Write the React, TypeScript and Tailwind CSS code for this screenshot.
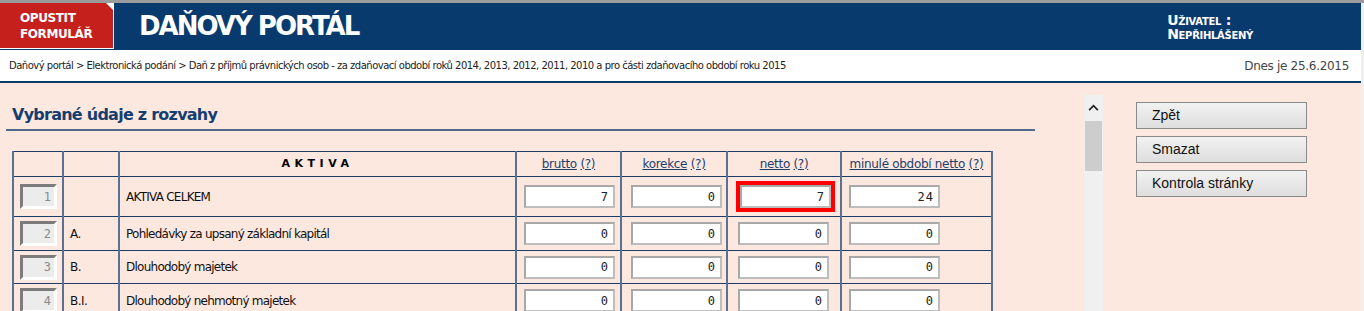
import type { ReactNode } from "react";

const tahoma = "font-['DejaVu_Sans',Verdana,sans-serif]";

const rows = [
  { n: "1", code: "", label: "AKTIVA CELKEM", vals: ["7", "0", "7", "24"], h: "h-[40px]" },
  { n: "2", code: "A.", label: "Pohledávky za upsaný základní kapitál", vals: ["0", "0", "0", "0"], h: "h-[34px]" },
  { n: "3", code: "B.", label: "Dlouhodobý majetek", vals: ["0", "0", "0", "0"], h: "h-[33px]" },
  { n: "4", code: "B.I.", label: "Dlouhodobý nehmotný majetek", vals: ["0", "0", "0", "0"], h: "h-[34px]" },
];

const cols = ["brutto", "korekce", "netto", "minulé období netto"];

function Cell({ children, className = "" }: { children?: ReactNode; className?: string }) {
  return (
    <td
      className={`border-x-2 border-x-[#5a7193] border-y border-y-[#1e3c69] p-0 ${className}`}
    >
      {children}
    </td>
  );
}

function NumBox({ value }: { value: string }) {
  return (
    <div className="flex h-[23px] w-[91px] items-center justify-end border-2 border-t-[#a8a8a8] border-l-[#a8a8a8] border-r-[#bdbdbd] border-b-[#bdbdbd] bg-white pr-[4px] font-['DejaVu_Sans_Mono',monospace] text-[12px] tracking-[1px] text-[#222]">
      {value}
    </div>
  );
}

function RowNo({ n }: { n: string }) {
  return (
    <div className="ml-[6px] flex h-[25px] w-[37px] items-center justify-end border-[3px] border-t-[#7c7c7c] border-l-[#7c7c7c] border-r-white border-b-white bg-[#ececec] pr-[3px] font-['DejaVu_Sans_Mono',monospace] text-[12px] text-[#8a8a8a]">
      {n}
    </div>
  );
}

function SideButton({ label }: { label: string }) {
  return (
    <button
      type="button"
      className="flex h-[27px] w-[171px] items-center border border-[#8a8a8a] bg-gradient-to-b from-[#f2f2f2] to-[#dedede] pl-[15px] font-['Liberation_Sans',Arial,sans-serif] text-[14px] text-[#111]"
    >
      {label}
    </button>
  );
}

export default function App() {
  return (
    <div className={`h-[311px] w-[1364px] overflow-hidden bg-[#f0f0f0] ${tahoma}`}>
      <div className="h-[3px] bg-[#9b9b9b]" />
      <div className="w-[1361px]">
        {/* header */}
        <header className="flex h-[47px] items-stretch bg-[#093a6e]">
          <div className="relative flex h-[46px] w-[114px] flex-col justify-center border-r border-b border-white bg-[#c6201c] pl-[20px] text-[12px] font-bold leading-[16px] tracking-[-0.4px] text-white">
            <span>OPUSTIT</span>
            <span>FORMULÁŘ</span>
            <span className="absolute right-0 top-0 h-0 w-0 border-l-[7px] border-t-[7px] border-l-transparent border-t-white" />
          </div>
          <h1 className="ml-[25px] flex items-center text-[26px] font-bold tracking-[-2px] text-white">
            DAŇOVÝ PORTÁL
          </h1>
          <div className="ml-auto mr-[108px] flex flex-col justify-center text-[14px] font-bold leading-[14px] tracking-[-0.3px] text-white [font-variant:small-caps]">
            <span>Uživatel :</span>
            <span>Nepřihlášený</span>
          </div>
        </header>

        {/* breadcrumb */}
        <div className="flex h-[33px] items-center justify-between border-b-2 border-[#0d3a6b] bg-white pl-[9px] pr-[12px]">
          <span className="text-[10px] tracking-[-0.5px] text-[#222]">
            Daňový portál &gt; Elektronická podání &gt; Daň z příjmů právnických osob - za zdaňovací období roků 2014, 2013, 2012, 2011, 2010 a pro části zdaňovacího období roku 2015
          </span>
          <span className="text-[12px] tracking-[-0.3px] text-[#444]">Dnes je 25.6.2015</span>
        </div>

        {/* content */}
        <div className="flex h-[228px] bg-[#fde8e0]">
          <div className="w-[1084px] pl-[6px]">
            <h2 className="h-[48px] w-[1029px] border-b-2 border-[#53698b] pl-[6px] pt-[20px] text-[16px] font-bold tracking-[-0.75px] text-[#153e6e]">
              Vybrané údaje z rozvahy
            </h2>
            <table className="ml-[6px] mt-[20px] table-fixed border-collapse border-t border-t-[#1e3c69]">
              <colgroup>
                <col className="w-[50px]" />
                <col className="w-[56px]" />
                <col className="w-[397px]" />
                <col className="w-[105px]" />
                <col className="w-[106px]" />
                <col className="w-[114px]" />
                <col className="w-[151px]" />
              </colgroup>
              <thead>
                <tr className="h-[25px]">
                  <Cell />
                  <Cell />
                  <Cell className="text-center text-[11px] font-bold tracking-[4.5px] text-black">AKTIVA</Cell>
                  {cols.map((c) => (
                    <Cell key={c} className="text-center text-[12px] tracking-[-0.3px] text-[#1d3e6b]">
                      <span className="underline">{c}</span> <span className="underline">(?)</span>
                    </Cell>
                  ))}
                </tr>
              </thead>
              <tbody>
                {rows.map((r) => (
                  <tr key={r.n} className={r.h}>
                    <Cell>
                      <RowNo n={r.n} />
                    </Cell>
                    <Cell className="pl-[6px] text-[12px] tracking-[-0.5px] text-[#111]">{r.code}</Cell>
                    <Cell className="pl-[6px] text-[12px] tracking-[-0.75px] text-[#111]">{r.label}</Cell>
                    <Cell className="pl-[7px]">
                      <NumBox value={r.vals[0]} />
                    </Cell>
                    <Cell className="pl-[9px]">
                      <NumBox value={r.vals[1]} />
                    </Cell>
                    <Cell className={r.n === "1" ? "pl-[8px]" : "pl-[10px]"}>
                      {r.n === "1" ? (
                        <div className="w-[99px] border-[4px] border-[#ff0000]">
                          <NumBox value={r.vals[2]} />
                        </div>
                      ) : (
                        <NumBox value={r.vals[2]} />
                      )}
                    </Cell>
                    <Cell className="pl-[7px]">
                      <NumBox value={r.vals[3]} />
                    </Cell>
                  </tr>
                ))}
              </tbody>
            </table>
          </div>

          {/* inner scrollbar */}
          <div className="mt-[12px] flex w-[19px] flex-col items-center bg-[#f0f0f0]">
            <svg viewBox="0 0 12 8" className="mt-[9px] h-[7px] w-[11px]" aria-hidden="true">
              <path d="M1 7L6 2l5 5" fill="none" stroke="#222" strokeWidth="2" />
            </svg>
            <div className="mt-[10px] h-[50px] w-[17px] bg-[#cdcdcd]" />
          </div>

          <div className="ml-[33px] flex flex-col gap-[7px] pt-[19px]">
            <SideButton label="Zpět" />
            <SideButton label="Smazat" />
            <SideButton label="Kontrola stránky" />
          </div>
        </div>
      </div>
    </div>
  );
}
